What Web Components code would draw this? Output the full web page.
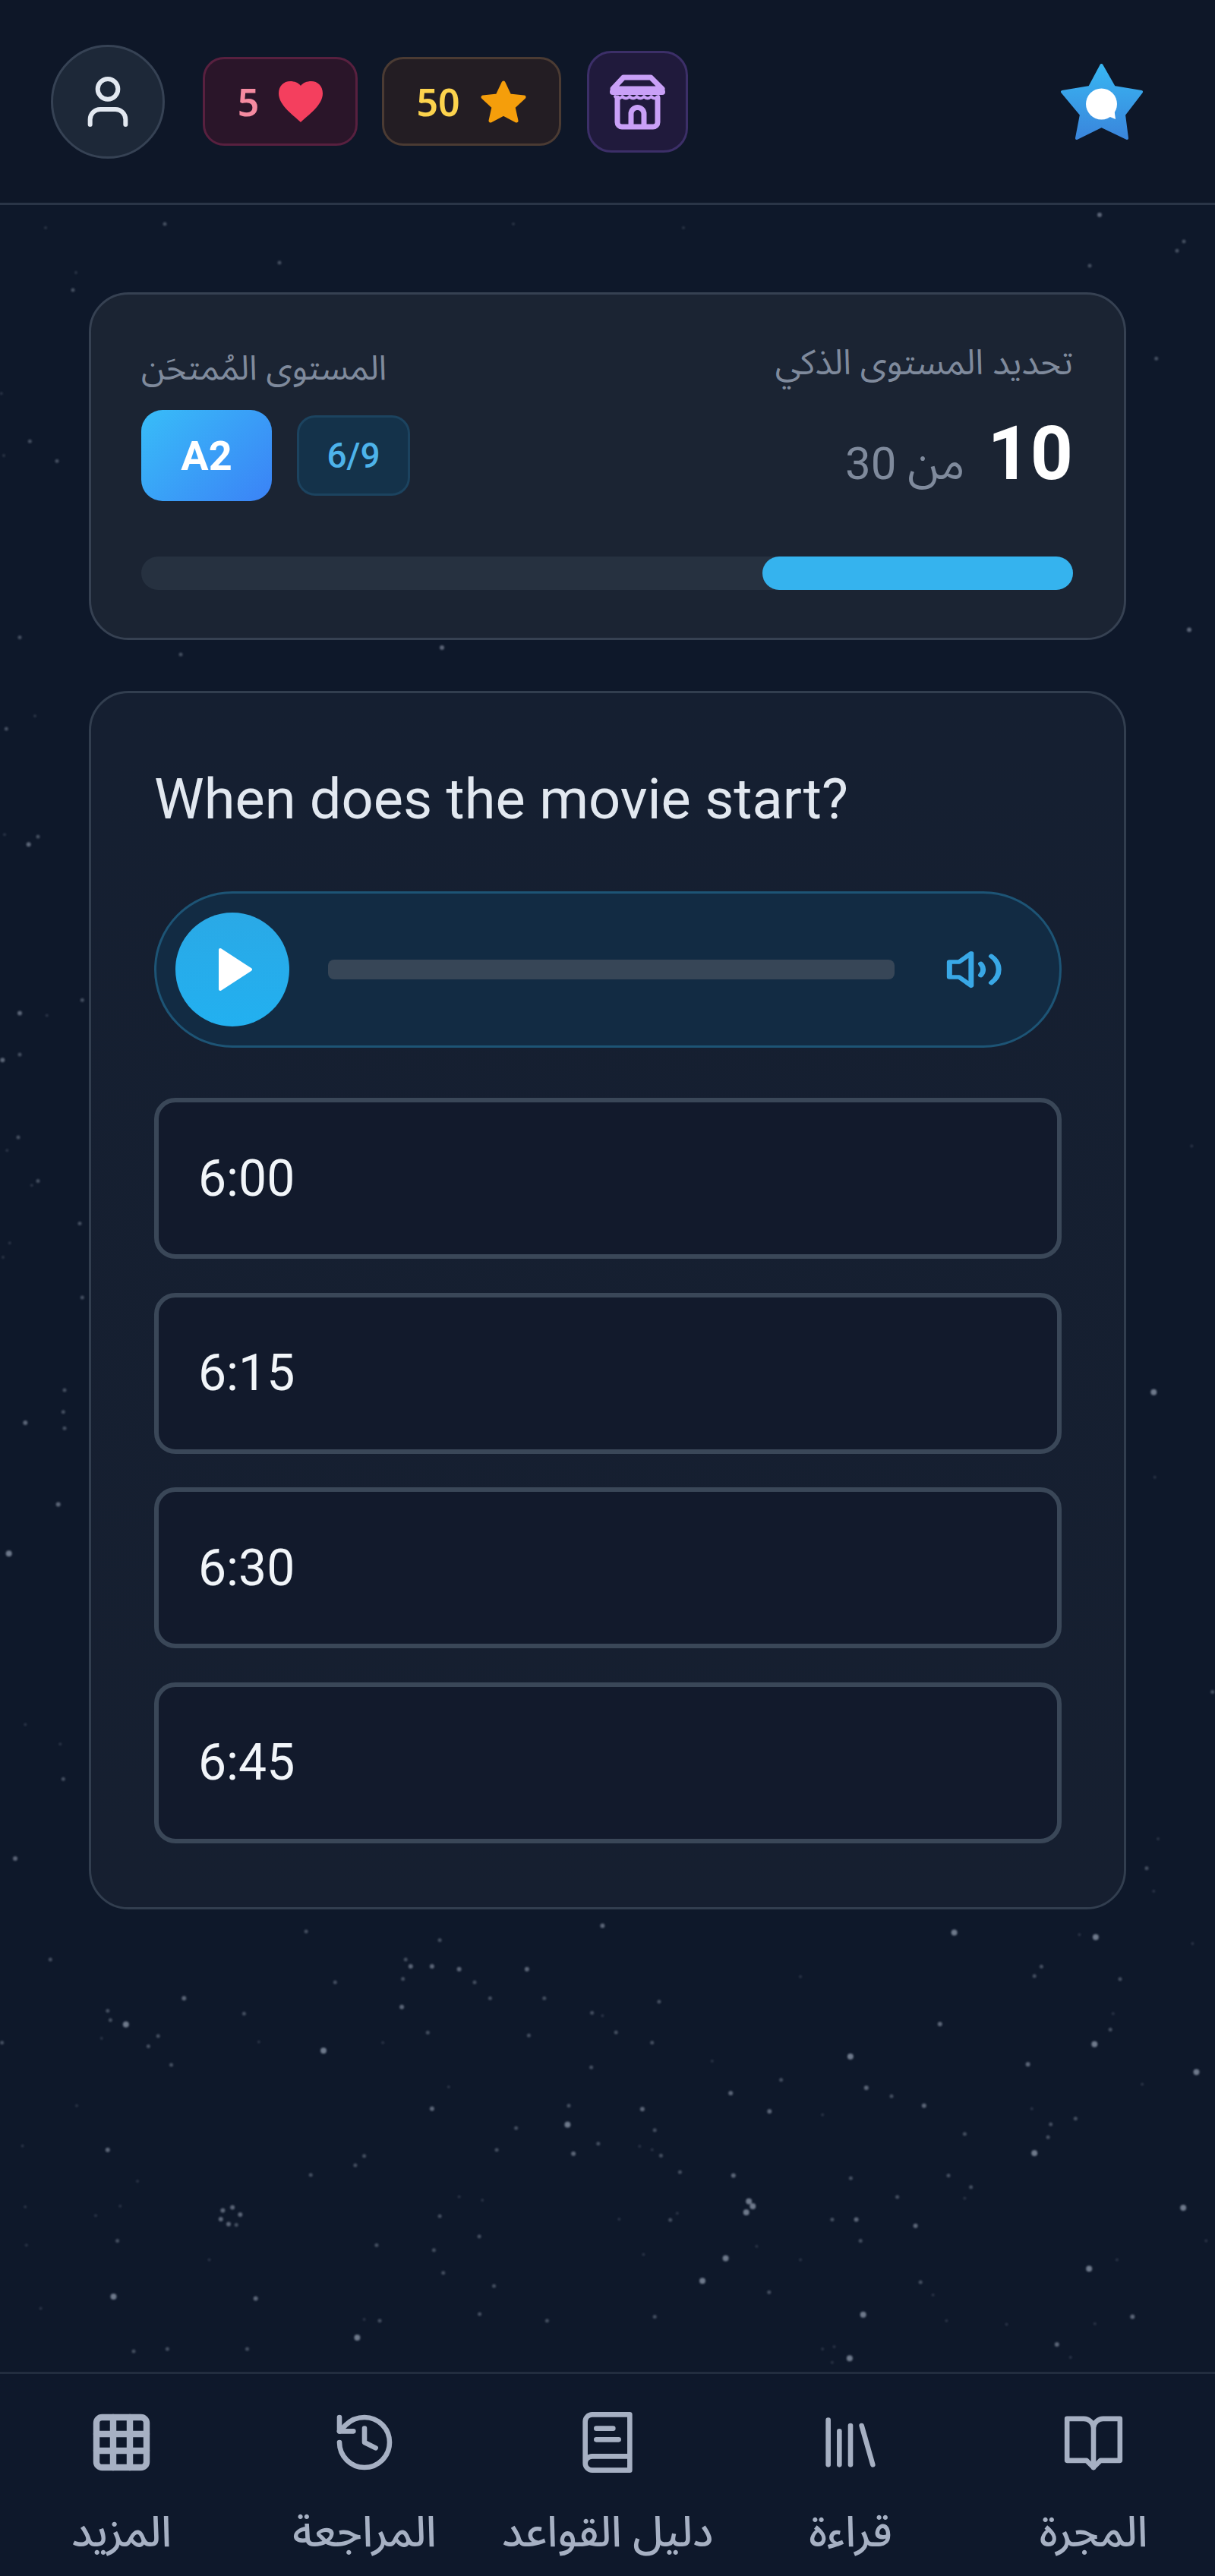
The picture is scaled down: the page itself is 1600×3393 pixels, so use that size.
<!DOCTYPE html>
<html lang="ar">
<head>
<meta charset="utf-8">
<title>Quiz</title>
<style>
  html, body { margin: 0; padding: 0; background: #0e182a; }
  body { width: 1600px; height: 3393px; overflow: hidden; font-family: Roboto, "Noto Sans", "DejaVu Sans", sans-serif; }
</style>
</head>
<body>
<quiz-page>
  <top-bar slot="top"></top-bar>
  <level-card slot="main" done="10" total="30" level="A2" step="6/9"></level-card>
  <question-card slot="main" question="When does the movie start?">
    <audio-player slot="audio"></audio-player>
    <answer-option>6:00</answer-option>
    <answer-option>6:15</answer-option>
    <answer-option>6:30</answer-option>
    <answer-option>6:45</answer-option>
  </question-card>
  <bottom-nav slot="bottom">
    <nav-item icon="grid">المزيد</nav-item>
    <nav-item icon="history">المراجعة</nav-item>
    <nav-item icon="grammar">دليل القواعد</nav-item>
    <nav-item icon="library">قراءة</nav-item>
    <nav-item icon="book">المجرة</nav-item>
  </bottom-nav>
</quiz-page>

<script>
const ARABIC = `"Noto Sans Arabic", "Noto Sans", "DejaVu Sans", sans-serif`;

const ICONS = {
  user: '<path d="M19 21v-2a4 4 0 0 0-4-4H9a4 4 0 0 0-4 4v2"/><circle cx="12" cy="7" r="4"/>',
  grid: '<g stroke-width="2.300"><rect x="3" y="3" width="18" height="18" rx="2"/><path d="M3 9h18M3 15h18M9 3v18M15 3v18"/></g>',
  history: '<path d="M3 12a9 9 0 1 0 9-9 9.75 9.75 0 0 0-6.74 2.74L3 8"/><path d="M3 3v5h5"/><path d="M12 7v5l4 2"/>',
  grammar: '<path d="M4 19.5v-15A2.5 2.5 0 0 1 6.5 2H20v20H6.5a2.5 2.5 0 0 1 0-5H20"/><path d="M8 7h6M8 11h8"/>',
  library: '<path d="m16 6 4 14"/><path d="M12 6v14"/><path d="M8 8v12"/><path d="M4 4v16"/>',
  book: '<path d="M12 6.5V21"/><path d="M2.500 3.500H8.500A3.500 3.500 0 0 1 12 6.500 3.500 3.500 0 0 1 15.500 3.500H21.500V18.500H14.500L12 21 9.500 18.500H2.500Z"/>'
};

class AppIcon extends HTMLElement {
  connectedCallback() {
    const size = this.getAttribute('size') || 88;
    const stroke = this.getAttribute('stroke') || 1.8;
    this.attachShadow({ mode: 'open' }).innerHTML = `
      <style>:host { display: block; width: ${size}px; height: ${size}px; } svg { display: block; }</style>
      <svg width="${size}" height="${size}" viewBox="0 0 24 24" fill="none" stroke="currentColor"
        stroke-width="${stroke}" stroke-linecap="round" stroke-linejoin="round">${ICONS[this.getAttribute('name')]}</svg>`;
  }
}
customElements.define('app-icon', AppIcon);

class QuizPage extends HTMLElement {
  constructor() {
    super();
    this.attachShadow({ mode: 'open' }).innerHTML = `
      <style>
        :host { display: flex; flex-direction: column; width: 1600px; height: 3393px; color: #e2e8f0; }
        main { position: relative; flex: 1; display: flex; flex-direction: column; gap: 67px; padding: 115px 117px 0 117px; }
        star-field { position: absolute; inset: 0; }
        ::slotted([slot="main"]) { position: relative; }
      </style>
      <slot name="top"></slot>
      <main><star-field></star-field><slot name="main"></slot></main>
      <slot name="bottom"></slot>`;
  }
}

// specks read off the reference, in crop coordinates of each zoomed strip
const S7 = `1555,95,3 790,115,2 1135,145,2 130,212,2 1047,212,2 1060,235,3 1115,235,3 1185,245,3 1360,245,3 1225,290,2 1040,278,2 865,290,2 475,345,3 1265,345,2 1405,345,2 630,398,2 278,388,2 285,420,2 325,435,4 1037,375,3 1528,395,2 1555,405,1 408,475,2 1365,473,2 262,483,1 383,510,2 1104,463,2 988,498,1 835,525,4 668,495,1 5,498,2 442,574,2 1526,583,2 1158,650,1 198,715,1 1115,725,3 1468,715,2 1465,780,4 1332,792,2 1480,880,3 1544,845,2 1282,867,2 278,867,3 58,853,1 940,888,2 917,920,2 802,953,2 355,975,1 65,1063,1 310,1060,1 247,1093,1 1185,1028,1 1245,1040,1 1135,1095,2 1237,1165,2 303,1180,2 68,1195,1 972,1195,2 1120,1212,2 540,1245,1 1144,1290,2 293,1372,4 660,1378,3 1275,1335,2 105,1412,1 940,1450,1 980,1455,2 1238,1432,2 1412,1455,2 922,1513,4 432,1552,2 638,1552,2 345,1560,2 575,1075,3 600,1065,3 620,1090,3 570,1105,3 590,1122,3 610,1125,2`;
const S8 = `895,115,4 1260,130,4 1218,122,1 1510,152,1 1120,228,2 1102,260,2 1323,270,2 498,262,1 133,345,2 1305,385,1 858,420,3 1298,438,2 22,448,2 115,482,2 1257,487,4 627,528,4 1085,554,3 270,543,1 1520,580,4 448,606,2 1380,620,1 668,632,3 733,660,2 318,650,3 817,692,3 90,703,3 418,711,3 1095,702,1 1208,735,2 1144,754,2 555,722,1 122,773,2 922,786,2 1137,797,2 83,827,1 115,838,1 138,858,2 1102,850,4 187,913,2 325,924,3 628,933,2 880,924,2 938,963,2 922,1000,1 748,996,2 365,1010,4 375,1027,4 358,1047,4 1486,1032,4 30,1070,1 162,1072,2 180,1050,1 580,1071,2 642,1071,3 795,1092,3 653,1142,2 1545,1142,1 93,1187,1 305,1200,4 498,1205,1 385,1160,1 1243,1235,4 1315,1205,1 245,1275,4 808,1280,2 417,1313,2 840,1322,1 122,1395,2 660,1388,4 1355,1395,3 875,1408,1 1030,1420,1 1258,1418,1 1160,1487,3 555,1502,1 585,1495,1 625,1533,4 580,1547,1 1195,1530,1`;
const S9 = `300,62,1 288,78,2 5,173,1 118,217,2 15,230,1 225,235,2 78,397,2 25,481,2 138,469,1 113,587,3 150,580,2 18,578,1 78,742,3 185,744,1 10,785,3 78,780,2 28,868,1 72,856,2 150,896,2 125,900,1 38,953,1 12,966,1 325,1003,2 315,935,2 100,1118,3 255,1088,2 250,1108,2 255,1123,2 230,1193,3 35,1238,4 238,1413,1 250,1445,2 60,1518,3 100,1395,1 325,730,2`;
const S10 = `210,42,2 128,141,2 258,390,3 268,864,1 118,1090,4 122,1168,1 350,1365,2 90,1527,2 135,1500,1 118,1548,1`;
const LOOSE = `217,295,2 676,295,1 1448,283,3 582,853,3 238,862,2 368,346,2 1435,350,2 1559,318,2 60,300,1 900,300,1`;

class StarField extends HTMLElement {
  constructor() {
    super();
    const dots = [];
    const add = (list, fx, fy) => list.split(' ').forEach(p => {
      const [x, y, s] = p.split(',').map(Number);
      dots.push([fx(x), fy(y), s]);
    });
    add(S7, x => x / 1.96, y => 2500 + y / 2.613);
    add(S8, x => 800 + x / 1.96, y => 2500 + y / 2.529);
    add(S9, x => x / 3, y => 270 + y / 0.697);
    add(S10, x => 1480 + x / 3, y => 270 + y / 0.697);
    add(LOOSE, x => x, y => y);
    const r = [0, 2, 2.5, 3, 4], o = [0, 0.18, 0.36, 0.5, 0.62];
    const circles = dots.map(([x, y, s]) =>
      `<circle cx="${x.toFixed(1)}" cy="${y.toFixed(1)}" r="${r[s]}" opacity="${o[s]}"/>`).join('');
    this.attachShadow({ mode: 'open' }).innerHTML = `
      <style>:host { display: block; } svg { display: block; filter: blur(0.8px); }</style>
      <svg width="1600" height="2854" viewBox="0 270 1600 2854" fill="#aab4c6">${circles}</svg>`;
  }
}

class TopBar extends HTMLElement {
  constructor() {
    super();
    this.attachShadow({ mode: 'open' }).innerHTML = `
      <style>
        :host { display: flex; align-items: center; box-sizing: border-box; height: 270px; padding: 0 95px 0 67px;
          background: #0e1728; border-bottom: 3px solid #2a3547; }
        .avatar { width: 150px; height: 150px; box-sizing: border-box; border-radius: 50%; background: #1d2838;
          border: 3px solid #364254; display: flex; align-items: center; justify-content: center; color: #e2e8f0; margin-right: 50px; }
        .pill { height: 117px; box-sizing: border-box; border-radius: 28px; border: 3px solid; display: flex; align-items: center;
          justify-content: center; gap: 26px; font: 600 50px "Noto Sans", sans-serif; }
        .hearts { width: 204px; background: #2a1529; border-color: #58203f; color: #f58aa0; margin-right: 32px; }
        .coins { width: 236px; background: #231d23; border-color: #4b3b33; color: #fcd34d; margin-right: 34px; }
        .shop { width: 133px; height: 134px; box-sizing: border-box; border-radius: 32px; background: #201a3c; border: 3px solid #3c2f68;
          display: flex; align-items: center; justify-content: center; }
        .spacer { flex: 1; }
        svg { display: block; }
      </style>
      <div class="avatar"><app-icon name="user" size="80"></app-icon></div>
      <div class="pill hearts"><span>5</span>
        <svg width="58" height="54" viewBox="0 0 58 54"><path fill="#f43f5e" d="M29 54C20 45 0 32 0 16 0 6 7 0 15 0c6 0 11 2 14 6 3-4 8-6 14-6 8 0 15 6 15 16 0 16-20 29-29 38Z"/></svg>
      </div>
      <div class="pill coins"><span>50</span>
        <svg width="62" height="58" viewBox="0 0 62 58"><path fill="#f59e0b" stroke="#f59e0b" stroke-width="5" stroke-linejoin="round" d="M31 4l8 17 19 2-14 13 4 18-17-9-17 9 4-18L4 23l19-2Z"/></svg>
      </div>
      <div class="shop">
        <svg width="75" height="74" viewBox="0 0 75 74" fill="none" stroke="#c9a0f7" stroke-width="7" stroke-linejoin="round" stroke-linecap="round">
          <path d="M19 5H55L70 20H5Z"/>
          <path d="M5 24H70" stroke-width="8"/>
          <path d="M8 30q4.800 5 9.500 0q4.800 5 9.500 0q4.800 5 9.500 0q4.800 5 9.500 0q4.800 5 9.500 0q4.800 5 9.500 0" stroke-width="4"/>
          <path d="M11 32V64a6 6 0 0 0 6 6H58a6 6 0 0 0 6-6V32"/>
          <path d="M29 69V53a8.500 8.500 0 0 1 17 0V69"/>
        </svg>
      </div>
      <div class="spacer"></div>
      <svg width="108" height="100" viewBox="0 0 108 100">
        <defs><linearGradient id="logo" x1="0" y1="0" x2="0" y2="1"><stop offset="0" stop-color="#38b6f2"/><stop offset="1" stop-color="#3a86dc"/></linearGradient></defs>
        <path fill="url(#logo)" stroke="url(#logo)" stroke-width="4" stroke-linejoin="round" d="M53.500 2 70 31 106 37 83 67 87 98 53.500 82 21 98 27 67 2 37 38 31Z"/>
        <circle cx="53.500" cy="53" r="20.500" fill="#fff"/>
        <path fill="#fff" d="M60 68 72 73 70 58Z"/>
      </svg>`;
  }
}

class LevelCard extends HTMLElement {
  constructor() {
    super();
    this.attachShadow({ mode: 'open' }).innerHTML = `
      <style>
        :host { display: block; box-sizing: border-box; height: 458px; padding: 69px 67px 0 66px; border-radius: 52px;
          background: #1b2433; border: 3px solid #364152; }
        .row { display: flex; justify-content: space-between; height: 276px; }
        .side { display: flex; flex-direction: column; }
        .label { font-family: ${ARABIC}; font-size: 46px; line-height: 60px; color: #7f8a9c; height: 60px; margin-top: -8px; }
        .examined { padding-top: 7px; align-items: flex-start; }
        .examined .label { font-size: 45px; }
        .badges { display: flex; align-items: center; gap: 33px; margin-top: 24px; }
        .level { width: 172px; height: 120px; border-radius: 28px; background: linear-gradient(135deg, #38bdf8, #3b82f6);
          display: flex; align-items: center; justify-content: center; color: #fff; font: 700 54px Roboto, sans-serif; }
        .step { width: 149px; height: 106px; box-sizing: border-box; border-radius: 24px; background: #14324a; border: 3px solid #1c435f;
          display: flex; align-items: center; justify-content: center; color: #4db3ea; font: 500 46px Roboto, sans-serif; }
        .score-side { align-items: flex-end; }
        .score { display: flex; direction: rtl; align-items: baseline; gap: 30px; margin-top: 34px; }
        .done { font: 700 98px/110px Roboto, sans-serif; color: #fff; }
        .total { font-family: Roboto, ${ARABIC}; font-size: 60px; color: #7f8a9c; }
        .track { height: 44px; border-radius: 22px; background: #263140; display: flex; justify-content: flex-end; }
        .fill { width: 409px; height: 44px; border-radius: 22px; background: #35b3ee; }
      </style>
      <div class="row">
        <div class="side examined">
          <div class="label" dir="rtl">المستوى المُمتحَن</div>
          <div class="badges"><div class="level">${this.getAttribute('level')}</div><div class="step">${this.getAttribute('step')}</div></div>
        </div>
        <div class="side score-side">
          <div class="label" dir="rtl">تحديد المستوى الذكي</div>
          <div class="score"><span class="done">${this.getAttribute('done')}</span><span class="total">من ${this.getAttribute('total')}</span></div>
        </div>
      </div>
      <div class="track"><div class="fill"></div></div>`;
  }
}

class QuestionCard extends HTMLElement {
  constructor() {
    super();
    this.attachShadow({ mode: 'open' }).innerHTML = `
      <style>
        :host { display: block; box-sizing: border-box; padding: 95px 82px 84px 83px; border-radius: 52px;
          background: linear-gradient(180deg, #151f31, #161f30); border: 3px solid #323e4f; }
        h2 { margin: 0 0 76px; font: 400 74px/90px Roboto, sans-serif; color: #e2e8f0; }
        .options { display: flex; flex-direction: column; gap: 44.500px; margin-top: 66px; }
      </style>
      <h2>${this.getAttribute('question')}</h2>
      <slot name="audio"></slot>
      <div class="options"><slot></slot></div>`;
  }
}

class AudioPlayer extends HTMLElement {
  constructor() {
    super();
    this.attachShadow({ mode: 'open' }).innerHTML = `
      <style>
        :host { display: flex; align-items: center; box-sizing: border-box; height: 206px; padding: 0 75px 0 25px;
          border-radius: 103px; background: #122b43; border: 3px solid #1d5475; }
        .play { width: 150px; height: 150px; border-radius: 50%; background: linear-gradient(180deg, #2aa9e6, #22b0f0);
          display: flex; align-items: center; justify-content: center; flex: none; }
        .play svg { margin-left: 8px; }
        .bar { flex: 1; height: 26px; border-radius: 8px; background: #374657; margin: 0 66px 0 51px; }
        svg { display: block; flex: none; }
      </style>
      <div class="play"><svg width="46" height="58" viewBox="0 0 46 58"><path fill="#fff" stroke="#fff" stroke-width="4" stroke-linejoin="round" d="M3 3 43 29 3 55Z"/></svg></div>
      <div class="bar"></div>
      <svg width="76" height="60" viewBox="0 0 24 24" preserveAspectRatio="none" fill="none" stroke="#39a8e6" stroke-width="2.200" stroke-linecap="round" stroke-linejoin="round">
        <path d="M11 3.500 6 8H2v8h4l5 4.500Z"/><path d="M15 9a5 5 0 0 1 0 6"/><path d="M19.400 19a9.500 9.500 0 0 0 0-14"/>
      </svg>`;
  }
}

class AnswerOption extends HTMLElement {
  constructor() {
    super();
    this.attachShadow({ mode: 'open' }).innerHTML = `
      <style>
        :host { display: flex; align-items: center; box-sizing: border-box; height: 212px; padding: 0 52px; border-radius: 28px;
          background: #121a2c; border: 6px solid #3a4758; font: 400 66px Roboto, sans-serif; color: #f1f5f9; }
      </style>
      <slot></slot>`;
  }
}

class BottomNav extends HTMLElement {
  constructor() {
    super();
    this.attachShadow({ mode: 'open' }).innerHTML = `
      <style>
        :host { display: grid; grid-template-columns: repeat(5, 1fr); box-sizing: border-box; height: 269px;
          background: #0e182b; border-top: 3px solid #222d3f; }
      </style>
      <slot></slot>`;
  }
}

class NavItem extends HTMLElement {
  constructor() {
    super();
    this.attachShadow({ mode: 'open' }).innerHTML = `
      <style>
        :host { display: flex; flex-direction: column; align-items: center; padding-top: 46px; color: #a6b0c3; }
        .label { font-family: ${ARABIC}; font-size: 56px; font-weight: 500; line-height: 64px; margin-top: 43px; white-space: nowrap; }
      </style>
      <app-icon name="${this.getAttribute('icon')}"></app-icon>
      <div class="label" dir="rtl"><slot></slot></div>`;
  }
}

customElements.define('star-field', StarField);
customElements.define('top-bar', TopBar);
customElements.define('level-card', LevelCard);
customElements.define('audio-player', AudioPlayer);
customElements.define('answer-option', AnswerOption);
customElements.define('question-card', QuestionCard);
customElements.define('nav-item', NavItem);
customElements.define('bottom-nav', BottomNav);
customElements.define('quiz-page', QuizPage);
</script>
</body>
</html>
